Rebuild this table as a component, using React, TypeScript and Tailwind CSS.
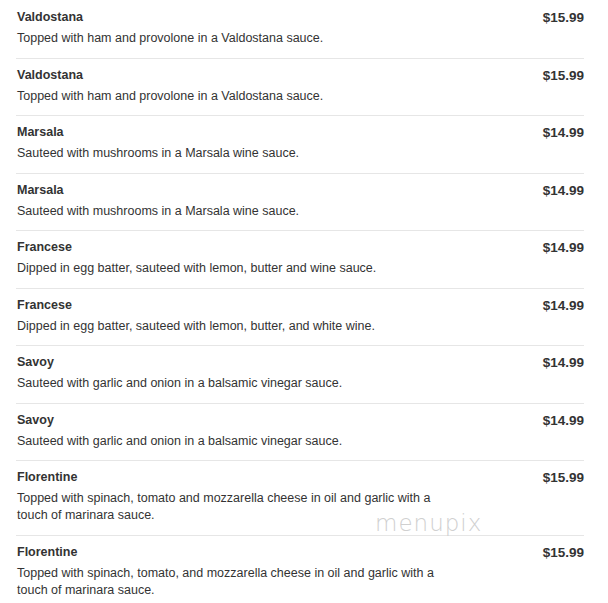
import React from "react";

const items: { name: string; desc: string; price: string }[] = [
  { name: "Valdostana", desc: "Topped with ham and provolone in a Valdostana sauce.", price: "$15.99" },
  { name: "Valdostana", desc: "Topped with ham and provolone in a Valdostana sauce.", price: "$15.99" },
  { name: "Marsala", desc: "Sauteed with mushrooms in a Marsala wine sauce.", price: "$14.99" },
  { name: "Marsala", desc: "Sauteed with mushrooms in a Marsala wine sauce.", price: "$14.99" },
  { name: "Francese", desc: "Dipped in egg batter, sauteed with lemon, butter and wine sauce.", price: "$14.99" },
  { name: "Francese", desc: "Dipped in egg batter, sauteed with lemon, butter, and white wine.", price: "$14.99" },
  { name: "Savoy", desc: "Sauteed with garlic and onion in a balsamic vinegar sauce.", price: "$14.99" },
  { name: "Savoy", desc: "Sauteed with garlic and onion in a balsamic vinegar sauce.", price: "$14.99" },
  { name: "Florentine", desc: "Topped with spinach, tomato and mozzarella cheese in oil and garlic with a touch of marinara sauce.", price: "$15.99" },
  { name: "Florentine", desc: "Topped with spinach, tomato, and mozzarella cheese in oil and garlic with a touch of marinara sauce.", price: "$15.99" },
];

export default function App() {
  return (
    <div className="relative w-[608px] h-[603px] overflow-hidden bg-white" style={{ fontFamily: '"Liberation Sans", Arial, sans-serif' }}>
      <div className="ml-4 w-[568px] pt-px">
        {items.map((it, i) => (
          <div key={i} className={`flex justify-between pt-2 pb-[10.5px] ${i < items.length - 1 ? "border-b border-[#e6e6e6]" : ""}`}>
            <div className="flex flex-col pl-px">
              <div className="text-[12.5px] leading-[17px] font-bold text-[#333]">{it.name}</div>
              <div className="mt-1 max-w-[430px] text-[12.5px] leading-[17px] text-[#333]">{it.desc}</div>
            </div>
            <div className="text-[13.5px] leading-[17px] font-bold text-[#333]">{it.price}</div>
          </div>
        ))}
      </div>
      <div className="absolute left-[375px] top-[512px] text-[23px] leading-none tracking-[1px] text-[#d0d0d0]" style={{ fontFamily: '"DejaVu Sans", sans-serif', fontWeight: 200 }}>
        menupix
      </div>
    </div>
  );
}
